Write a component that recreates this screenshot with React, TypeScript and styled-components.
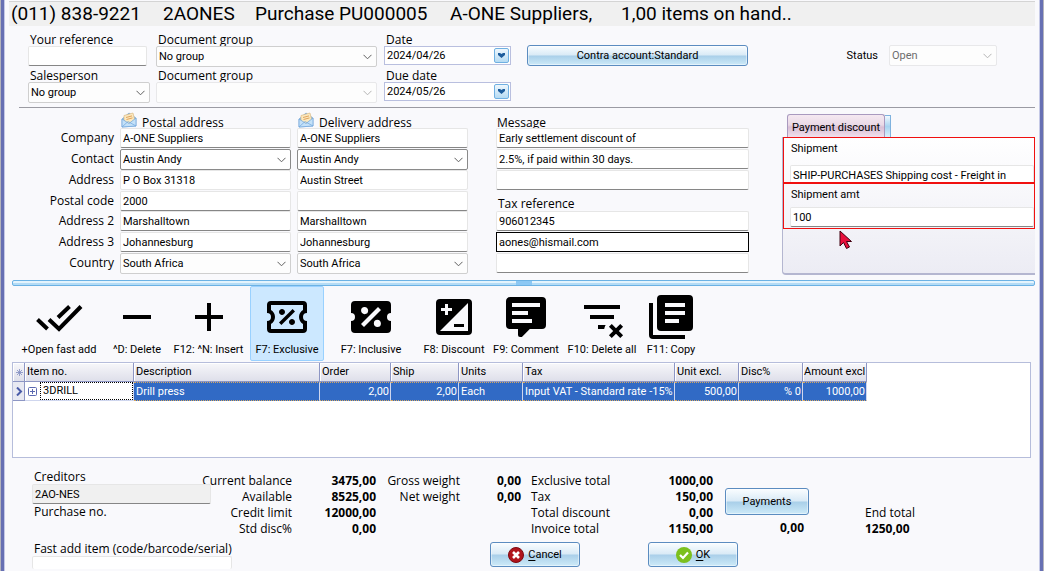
import React from "react";
import styled, { createGlobalStyle } from "styled-components";

const ui = `"Open Sans", "Noto Sans", sans-serif`;
const sans = `Roboto, "Liberation Sans", sans-serif`;

const GlobalStyle = createGlobalStyle`
  *, *::before, *::after { box-sizing: border-box; }
  body { margin: 0; background: #f9f9fc; color: #000; font: 11px/16px ${sans}; }
  input, select, button { font: inherit; color: inherit; margin: 0; }
`;

const Backdrop = styled.div`
  padding: 0 1px;
  background: #b4b4bc;
`;

const Frame = styled.div`
  display: flex;
  flex-direction: column;
  min-height: 100vh;
  overflow: hidden;
  background: #f9f9fc;
  border-left: 3px solid #6770b3;
  border-right: 3px solid #6770b3;
  box-shadow: inset 1px 0 #c5c9e6, inset -1px 0 #c5c9e6;
  padding: 1px 5px 0;
`;

const TitleBar = styled.h1`
  display: flex;
  align-items: center;
  margin: 0;
  height: 25px;
  padding-left: 2px;
  background: #f0f0f0;
  border-top: 1px solid #d4d4d4;
  font: 400 19px/24px ${sans};
  white-space: pre;
`;

const TitlePart = styled.span<{ $w?: number }>`
  width: ${(p) => (p.$w ? `${p.$w}px` : "auto")};
`;

const Label = styled.label<{ $plain?: boolean }>`
  display: block;
  font-family: ${(p) => (p.$plain ? sans : ui)};
  font-size: ${(p) => (p.$plain ? 11 : 12)}px;
  line-height: 16px;
  white-space: nowrap;
`;

const TextInput = styled.input<{ $tone?: "focus" | "grey" | "soft" }>`
  display: block;
  width: 100%;
  height: 20px;
  padding: 0 2px;
  border: 1px solid #e6e6e6;
  border-bottom-color: ${(p) => (p.$tone === "soft" ? "#e6e6e6" : "#868686")};
  border-radius: 2px;
  outline: none;
  background: ${(p) => (p.$tone === "grey" ? "#f0f0f0" : "#fff")};
  ${(p) => p.$tone === "focus" && "border-color: #000; border-radius: 0;"}
`;

const SelectBox = styled.div<{ $strong?: boolean; $off?: boolean }>`
  position: relative;
  height: 21px;
  border: 1px solid ${(p) => (p.$off ? "#e8e8ea" : p.$strong ? "#8a8a8a" : "#cfcfcf")};
  border-radius: 2px;
  background: ${(p) => (p.$strong ? "#fff" : "#fdfdfd")};
  color: ${(p) => (p.$off ? "#6d6d6d" : "#000")};
  select {
    width: 100%;
    height: 100%;
    padding: 0 18px 0 2px;
    border: 0;
    outline: none;
    background: transparent;
    appearance: none;
    opacity: 1;
  }
  svg {
    position: absolute;
    right: 4px;
    top: 7px;
    pointer-events: none;
    stroke: ${(p) => (p.$off ? "#b4b4b4" : "#606060")};
  }
`;

function Select(p: { id: string; value: string; strong?: boolean; off?: boolean; label?: string }) {
  return (
    <SelectBox $strong={p.strong} $off={p.off}>
      <select id={p.id} disabled={p.off} aria-label={p.label} defaultValue={p.value}>
        <option>{p.value}</option>
      </select>
      <svg width="9" height="6" viewBox="0 0 9 6" fill="none">
        <path d="M0.5 0.8 4.5 4.8 8.5 0.8" />
      </svg>
    </SelectBox>
  );
}

/* ---- document details ---- */

const Details = styled.section`
  display: flex;
  align-items: flex-start;
  margin-left: 10px;
  padding: 5px 0 4px 9px;
  border-bottom: 1px solid #9b9ba3;
`;

const FieldColumn = styled.div<{ $w: number; $gap: number }>`
  display: grid;
  grid-template-columns: minmax(0, 1fr);
  grid-template-rows: 15px 21px 15px 21px;
  flex: 0 0 ${(p) => p.$w}px;
  margin-right: ${(p) => p.$gap}px;
  ${Label} { padding-left: 2px; line-height: 17px; }
`;

const ShortInput = styled(TextInput)`
  width: 119px;
`;

const DateBox = styled.div`
  display: flex;
  align-items: center;
  height: 19px;
  padding-right: 1px;
  border: 1px solid #b9bfdf;
  background: #fff;
  input { flex: 1; min-width: 0; padding: 0 2px; border: 0; outline: none; background: none; }
  button {
    display: flex;
    flex: none;
    align-items: center;
    justify-content: center;
    width: 15px;
    height: 15px;
    padding: 0;
    border: 1px solid #6fb0e2;
    border-radius: 2px;
    background: linear-gradient(#eef7fd, #b5dbf3);
  }
`;

function DateField({ id, value }: { id: string; value: string }) {
  return (
    <DateBox>
      <input id={id} defaultValue={value} />
      <button aria-label="Open calendar">
        <svg width="7" height="5" viewBox="0 0 7 5">
          <path d="M0 0h2l1.500 1L5 0h2v2L3.500 5 0 2z" fill="#1c5c9c" />
        </svg>
      </button>
    </DateBox>
  );
}

const GlossButton = styled.button<{ $w: number; $h: number }>`
  display: inline-flex;
  flex: none;
  align-items: center;
  justify-content: center;
  gap: 4px;
  width: ${(p) => p.$w}px;
  height: ${(p) => p.$h}px;
  padding: 0;
  border: 1px solid #5b8cc0;
  border-radius: 3px;
  background: linear-gradient(#fafdff 0%, #d9eaf6 48%, #a9cfe9 52%, #cdeaf8 100%);
  box-shadow: inset 0 0 0 1px rgba(255, 255, 255, 0.45);
`;

const ContraSlot = styled.div`
  padding-top: 14px;
`;

const StatusField = styled.div`
  display: grid;
  grid-template-columns: auto 108px;
  align-items: center;
  gap: 11px;
  margin: 14px 38px 0 auto;
`;

/* ---- addresses ---- */

const Addresses = styled.section`
  display: flex;
  align-items: flex-start;
  padding-top: 6px;
`;

const FieldStack = styled.div<{ $w: number; $gap: number; $right?: boolean }>`
  display: grid;
  grid-template-columns: minmax(0, 1fr);
  grid-template-rows: 14px 21px 21px 21px 20px 21px 21px 21px;
  flex: 0 0 ${(p) => p.$w}px;
  margin-right: ${(p) => p.$gap}px;
  ${Label} {
    padding-left: 2px;
    line-height: ${(p) => (p.$right ? 20 : 25)}px;
    text-align: ${(p) => (p.$right ? "right" : "left")};
  }
`;

const StackHeading = styled.div`
  display: flex;
  align-items: flex-end;
  gap: 5px;
  height: 14px;
  padding-left: 1px;
  font-family: ${ui};
  font-size: 12px;
  line-height: 11px;
  white-space: nowrap;
`;

function Envelope() {
  return (
    <svg width="16" height="16" viewBox="0 0 16 16">
      <path d="M1 7 8 1l7 5v8L1 15z" fill="#8fbfe8" stroke="#6f9fd0" strokeWidth="0.6" />
      <path d="M3 3.5 12 1l2 8-6 3-5-3z" fill="#fbe9c0" stroke="#d9b177" strokeWidth="0.6" />
      <path d="M5 5.5l6-1.6M5.5 7.5l6-1.6" stroke="#e2a45c" />
      <path d="M1 7l7 4.500L15 6v8L1 15z" fill="#c4e1f8" stroke="#6fa5dc" strokeWidth="0.7" />
      <path d="M1 15l6-5.500L15 14" fill="none" stroke="#6fa5dc" strokeWidth="0.7" />
    </svg>
  );
}

const rowNames = ["Company", "Contact", "Address", "Postal code", "Address 2", "Address 3", "Country"];

function AddressStack(p: { prefix: string; title: string; rows: string[]; gap: number }) {
  return (
    <FieldStack $w={171} $gap={p.gap}>
      <StackHeading>
        <Envelope />
        {p.title}
      </StackHeading>
      {p.rows.map((v, i) =>
        i === 1 || i === 6 ? (
          <Select key={i} id={`${p.prefix}-${i}`} value={v} strong={i === 1} label={`${p.title} ${rowNames[i]}`} />
        ) : (
          <TextInput
            key={i}
            id={`${p.prefix}-${i}`}
            defaultValue={v}
            aria-label={`${p.title} ${rowNames[i]}`}
            $tone={i === 2 ? "soft" : undefined}
          />
        )
      )}
    </FieldStack>
  );
}

const DiscountPanel = styled.div`
  position: relative;
  flex: 1;
  min-width: 0;
`;

const Tabs = styled.div`
  display: flex;
  align-items: flex-end;
  height: 23px;
  padding-left: 5px;
`;

const Tab = styled.button`
  flex: none;
  height: 23px;
  width: 98px;
  padding: 3px 0 0;
  border: 1px solid #a99abf;
  border-bottom: 0;
  border-radius: 3px 3px 0 0;
  background: linear-gradient(#f5e9f1 0%, #ead9e6 45%, #d9bfd5 55%, #f0dfec 100%);
  white-space: nowrap;
`;

const TabEdge = styled.span`
  width: 6px;
  height: 22px;
  border: 1px solid #7fb2de;
  border-width: 1px 1px 0 0;
  background: linear-gradient(#f2faff, #a8d3f0 50%, #dcf0fb);
`;

const PanelBody = styled.div`
  height: 138px;
  border: solid #b4b6d0;
  border-width: 0 0 2px 1px;
  border-radius: 0 0 0 4px;
  background: linear-gradient(#fff, #ececf4);
`;

const MarkedField = styled.div<{ $label: number }>`
  height: 46px;
  padding: 3px 0 0 6px;
  border: 1px solid #f01010;
  overflow: hidden;
  ${Label} { height: ${(p) => p.$label}px; padding-left: 1px; }
`;

const Pointer = styled.svg`
  position: absolute;
  left: 57px;
  top: 116px;
`;

/* ---- splitter and toolbar ---- */

const Splitter = styled.div`
  display: flex;
  justify-content: center;
  height: 6px;
  margin: 5px 0 0 3px;
  border: 1px solid #6cb2e4;
  border-radius: 2px;
  background: linear-gradient(#e4f4fd 50%, #b4dcf6 50%);
  &::before { content: ""; width: 16px; background: #8cc8f4; }
`;

const Toolbar = styled.div`
  display: flex;
  padding-left: 2px;
`;

const Tool = styled.button<{ $w: number; $on?: boolean }>`
  display: flex;
  flex: none;
  flex-direction: column;
  align-items: center;
  width: ${(p) => p.$w}px;
  height: 75px;
  padding: 6px 0 0;
  border: 1px solid ${(p) => (p.$on ? "#99d1ff" : "transparent")};
  border-radius: 2px;
  background: ${(p) => (p.$on ? "#cce8ff" : "transparent")};
  line-height: 18px;
  white-space: nowrap;
`;

const tools: { label: string; w: number; d?: string; on?: boolean }[] = [
  { label: "+Open fast add", w: 96 },
  { label: "^D: Delete", w: 60, d: "M19 13H5v-2h14z" },
  { label: "F12: ^N: Insert", w: 83, d: "M19 13h-6v6h-2v-6H5v-2h6V5h2v6h6z" },
  {
    label: "F7: Exclusive",
    w: 74,
    on: true,
    d: "M14.8,8L16,9.2L9.2,16L8,14.8L14.8,8M4,4H20A2,2 0 0,1 22,6V10A2,2 0 0,0 20,12A2,2 0 0,0 22,14V18A2,2 0 0,1 20,20H4A2,2 0 0,1 2,18V14A2,2 0 0,0 4,12A2,2 0 0,0 2,10V6A2,2 0 0,1 4,4M4,6V8.54C5.24,9.26 6,10.57 6,12C6,13.43 5.24,14.75 4,15.46V18H20V15.46C18.76,14.74 18,13.43 18,12C18,10.57 18.76,9.25 20,8.54V6H4M9.5,8C10.33,8 11,8.67 11,9.5C11,10.33 10.33,11 9.5,11C8.67,11 8,10.33 8,9.5C8,8.67 8.67,8 9.5,8M14.5,13C15.33,13 16,13.67 16,14.5C16,15.33 15.33,16 14.5,16C13.67,16 13,15.33 13,14.5C13,13.67 13.67,13 14.5,13Z",
  },
  {
    label: "F7: Inclusive",
    w: 94,
    d: "M4,4A2,2 0 0,0 2,6V10A2,2 0 0,1 4,12A2,2 0 0,1 2,14V18A2,2 0 0,0 4,20H20A2,2 0 0,0 22,18V14A2,2 0 0,1 20,12A2,2 0 0,1 22,10V6A2,2 0 0,0 20,4H4M15.5,7L17,8.5L8.5,17L7,15.5L15.5,7M8.81,7.04C9.79,7.04 10.58,7.83 10.58,8.81A1.77,1.77 0 0,1 8.81,10.58C7.83,10.58 7.04,9.79 7.04,8.81A1.77,1.77 0 0,1 8.81,7.04M15.19,13.42C16.17,13.42 16.96,14.21 16.96,15.19A1.77,1.77 0 0,1 15.19,16.96C14.21,16.96 13.42,16.17 13.42,15.19A1.77,1.77 0 0,1 15.19,13.42Z",
  },
  {
    label: "F8: Discount",
    w: 72,
    d: "M5 3H19A2 2 0 0 1 21 5V19A2 2 0 0 1 19 21H5A2 2 0 0 1 3 19V5A2 2 0 0 1 5 3M19 5L5 19H19V5M5.5 7.5V9H7.5V11H9V9H11V7.5H9V5.5H7.5V7.5H5.5M12 15.5H17V17H12V15.5Z",
  },
  {
    label: "F9: Comment",
    w: 72,
    d: "M9,22A1,1 0 0,1 8,21V18H4A2,2 0 0,1 2,16V4C2,2.89 2.9,2 4,2H20A2,2 0 0,1 22,4V16A2,2 0 0,1 20,18H13.9L10.2,21.71C10,21.9 9.75,22 9.5,22V22H9M5,5V7H19V5H5M5,9V11H13V9H5M5,13V15H15V13H5Z",
  },
  {
    label: "F10: Delete all",
    w: 80,
    d: "M21 8H3V6H21V8M13.81 16H10V18H13.09C13.21 17.28 13.46 16.61 13.81 16M18 11H6V13H18V11M21.12 15.46L19 17.59L16.88 15.46L15.47 16.88L17.59 19L15.47 21.12L16.88 22.54L19 20.41L21.12 22.54L22.54 21.12L20.41 19L22.54 16.88L21.12 15.46Z",
  },
  {
    label: "F11: Copy",
    w: 58,
    d: "M7 1H21A2 2 0 0 1 23 3V17A2 2 0 0 1 21 19H7A2 2 0 0 1 5 17V3A2 2 0 0 1 7 1M9 5V7H19V5H9M9 9V11H19V9H9M9 13V15H16V13H9M1 5H3V21H19V23H3A2 2 0 0 1 1 21V5Z",
  },
];

/* ---- item grid ---- */

const GridBox = styled.div`
  height: 96px;
  margin: 1px 4px 0 3px;
  border: 1px solid #b6bddb;
  background: #fff;
`;

const ItemTable = styled.table`
  width: 854px;
  table-layout: fixed;
  border-collapse: separate;
  border-spacing: 0;
  th, td { height: 19px; padding: 0 1px 0 2px; white-space: nowrap; overflow: hidden; line-height: 16px; }
  th {
    border-right: 1px solid #8d96c4;
    border-bottom: 1px solid #8d96c4;
    background: linear-gradient(#f7f7fa, #dedfea);
    box-shadow: inset 1px 1px #fff;
    font-weight: 400;
    text-align: left;
  }
  th:last-child { padding: 0 0 0 1px; }
`;

const Cell = styled.td<{ $num?: boolean }>`
  border-right: 1px solid #cfd6ee;
  border-top: 1px dotted #d8a860;
  border-bottom: 1px dotted #d8a860;
  background: #316ac5;
  color: #fff;
  text-align: ${(p) => (p.$num ? "right" : "left")};
`;

const MarkCell = styled.td`
  border-right: 1px solid #8d96c4;
  border-bottom: 1px solid #8d96c4;
  background: #e8e9f2;
  svg { display: block; margin: auto; }
`;

const CodeCell = styled.td`
  border-right: 1px solid #cfd6ee;
  border-bottom: 1px solid #cfd6ee;
  && { padding: 0; }
  div { display: flex; align-items: center; gap: 3px; padding-left: 3px; }
  span { flex: 1; height: 18px; padding-left: 2px; border: 1px dotted #000; }
`;

const columns: [string, number][] = [
  ["Item no.", 109],
  ["Description", 186],
  ["Order", 71],
  ["Ship", 68],
  ["Units", 64],
  ["Tax", 152],
  ["Unit excl.", 64],
  ["Disc%", 64],
  ["Amount excl", 64],
];

/* ---- totals ---- */

const Totals = styled.section`
  display: flex;
  align-items: flex-start;
  height: 83px;
  padding-left: 23px;
  font-size: 12px;
`;

const Creditor = styled.div`
  position: relative;
  z-index: 1;
  flex: 0 0 179px;
  padding-top: 11px;
  ${Label} { padding-left: 2px; line-height: 15px; }
  input { font-size: 11px; }
`;

const Figures = styled.dl<{ $l: number; $v: number; $gap: number; $left?: boolean }>`
  display: grid;
  grid-template-columns: ${(p) => p.$l}px ${(p) => p.$v}px;
  grid-auto-rows: 16px;
  flex: none;
  margin: 15px 0 0 ${(p) => p.$gap}px;
  font-family: ${ui};
  white-space: nowrap;
  dt, dd { display: flex; margin: 0; justify-content: flex-end; }
  dt { justify-content: ${(p) => (p.$left ? "flex-start" : "flex-end")}; }
  dd { font-weight: 700; }
`;

const PaymentColumn = styled.div`
  display: flex;
  flex-direction: column;
  gap: 5px;
  margin: 30px 0 0 12px;
  font-family: ${ui};
  b { align-self: flex-end; padding-right: 5px; }
  button { font-family: ${sans}; font-size: 11px; }
`;

const EndTotal = styled.div`
  margin: 47px 0 0 56px;
  font-family: ${ui};
  b { display: block; }
`;

const Actions = styled.section`
  display: flex;
  align-items: flex-start;
  padding-left: 23px;
`;

const FastAdd = styled.div`
  flex: 0 0 200px;
  ${Label} { padding-left: 2px; line-height: 15px; }
  input { height: 13px; border-bottom: 0; }
`;

const ActionButtons = styled.div`
  display: flex;
  gap: 68px;
  margin-left: 258px;
  padding-top: 1px;
  u { text-underline-offset: 2px; }
`;

const balances = [["Current balance", "3475,00"], ["Available", "8525,00"], ["Credit limit", "12000,00"], ["Std disc%", "0,00"]];
const weights = [["Gross weight", "0,00"], ["Net weight", "0,00"]];
const totals = [["Exclusive total", "1000,00"], ["Tax", "150,00"], ["Total discount", "0,00"], ["Invoice total", "1150,00"]];

const pairs = (rows: string[][]) =>
  rows.map(([k, v]) => (
    <React.Fragment key={k}>
      <dt>{k}</dt>
      <dd>{v}</dd>
    </React.Fragment>
  ));

export default function App() {
  return (
    <Backdrop>
      <GlobalStyle />
      <Frame>
        <TitleBar>
          <TitlePart $w={152}>(011) 838-9221</TitlePart>
          <TitlePart $w={92}>2AONES</TitlePart>
          <TitlePart $w={195}>Purchase PU000005</TitlePart>
          <TitlePart $w={171}>A-ONE Suppliers,</TitlePart>
          <TitlePart>1,00 items on hand..</TitlePart>
        </TitleBar>

        <Details>
          <FieldColumn $w={122} $gap={6}>
            <Label htmlFor="ref">Your reference</Label>
            <ShortInput id="ref" />
            <Label htmlFor="sales">Salesperson</Label>
            <Select id="sales" value="No group" />
          </FieldColumn>
          <FieldColumn $w={221} $gap={7}>
            <Label htmlFor="g1">Document group</Label>
            <Select id="g1" value="No group" />
            <Label htmlFor="g2">Document group</Label>
            <Select id="g2" value="" off />
          </FieldColumn>
          <FieldColumn $w={127} $gap={16}>
            <Label htmlFor="d1">Date</Label>
            <DateField id="d1" value="2024/04/26" />
            <Label htmlFor="d2">Due date</Label>
            <DateField id="d2" value="2024/05/26" />
          </FieldColumn>
          <ContraSlot>
            <GlossButton $w={221} $h={21}>Contra account:Standard</GlossButton>
          </ContraSlot>
          <StatusField>
            <Label $plain htmlFor="status">Status</Label>
            <Select id="status" value="Open" off />
          </StatusField>
        </Details>

        <Addresses>
          <FieldStack $w={105} $gap={6} $right>
            <span />
            {rowNames.map((n, i) => (
              <Label key={n} htmlFor={`postal-${i}`}>{n}</Label>
            ))}
          </FieldStack>
          <AddressStack
            prefix="postal"
            title="Postal address"
            gap={6}
            rows={["A-ONE Suppliers", "Austin Andy", "P O Box 31318", "2000", "Marshalltown", "Johannesburg", "South Africa"]}
          />
          <AddressStack
            prefix="delivery"
            title="Delivery address"
            gap={28}
            rows={["A-ONE Suppliers", "Austin Andy", "Austin Street", "", "Marshalltown", "Johannesburg", "South Africa"]}
          />
          <FieldStack $w={253} $gap={33}>
            <StackHeading as="label" htmlFor="m1">Message</StackHeading>
            <TextInput id="m1" defaultValue="Early settlement discount of" />
            <TextInput aria-label="Message line 2" defaultValue="2.5%, if paid within 30 days." />
            <TextInput aria-label="Message line 3" />
            <Label htmlFor="tax">Tax reference</Label>
            <TextInput id="tax" defaultValue="906012345" />
            <TextInput aria-label="Email" defaultValue="aones@hismail.com" $tone="focus" />
            <TextInput aria-label="Extra reference" />
          </FieldStack>
          <DiscountPanel>
            <Tabs>
              <Tab>Payment discount</Tab>
              <TabEdge />
            </Tabs>
            <PanelBody>
              <MarkedField $label={24}>
                <Label $plain htmlFor="ship">Shipment</Label>
                <TextInput id="ship" defaultValue="SHIP-PURCHASES Shipping cost - Freight in" />
              </MarkedField>
              <MarkedField $label={20}>
                <Label $plain htmlFor="amt">Shipment amt</Label>
                <TextInput id="amt" defaultValue="100" />
              </MarkedField>
            </PanelBody>
            <Pointer width="14" height="20" viewBox="0 0 14 20">
              <path d="M1 1v15l3.500-3.500 3 6 3-1.500-3-5.500h5z" fill="#e8103c" stroke="#400010" />
            </Pointer>
          </DiscountPanel>
        </Addresses>

        <Splitter />

        <Toolbar>
          {tools.map((t) => (
            <Tool key={t.label} $w={t.w} $on={t.on}>
              {t.d ? (
                <svg width="48" height="48" viewBox="0 0 24 24">
                  <path d={t.d} fillRule="evenodd" />
                </svg>
              ) : (
                <svg width="48" height="48" viewBox="0 0 48 48" fill="none" stroke="#000" strokeWidth="4">
                  <path d="M2.500 26.500 12.500 36M14 26.500 24 36 46 13.500M23 24.500 34.500 13.500" />
                </svg>
              )}
              {t.label}
            </Tool>
          ))}
        </Toolbar>

        <GridBox>
          <ItemTable>
            <colgroup>
              <col width={12} />
              {columns.map(([n, w]) => <col key={n} width={w} />)}
            </colgroup>
            <thead>
              <tr>
                <MarkCell as="th" aria-label="Row marker">
                  <svg width="7" height="7" viewBox="0 0 7 7" stroke="#7f8cc0">
                    <path d="M3.500 0v7M0 3.500h7M1 1l5 5M6 1 1 6" strokeWidth="0.8" />
                  </svg>
                </MarkCell>
                {columns.map(([n]) => <th key={n}>{n}</th>)}
              </tr>
            </thead>
            <tbody>
              <tr>
                <MarkCell>
                  <svg width="7" height="9" viewBox="0 0 7 9" fill="none" stroke="#4a5ba8" strokeWidth="2">
                    <path d="M1 0.500 5 4.500 1 8.500" />
                  </svg>
                </MarkCell>
                <CodeCell>
                  <div>
                    <svg width="9" height="9" viewBox="0 0 9 9" fill="#fff" stroke="#5a68b0">
                      <rect x="0.500" y="0.500" width="8" height="8" rx="1" />
                      <path d="M2 4.500h5M4.500 2v5" />
                    </svg>
                    <span>3DRILL</span>
                  </div>
                </CodeCell>
                <Cell>Drill press</Cell>
                <Cell $num>2,00</Cell>
                <Cell $num>2,00</Cell>
                <Cell>Each</Cell>
                <Cell>Input VAT - Standard rate -15%</Cell>
                <Cell $num>500,00</Cell>
                <Cell $num>% 0</Cell>
                <Cell $num>1000,00</Cell>
              </tr>
            </tbody>
          </ItemTable>
        </GridBox>

        <Totals>
          <Creditor>
            <Label htmlFor="cred">Creditors</Label>
            <TextInput id="cred" defaultValue="2AO-NES" $tone="grey" />
            <Label as="div">Purchase no.</Label>
          </Creditor>
          <Figures $l={81} $v={84} $gap={0}>{pairs(balances)}</Figures>
          <Figures $l={84} $v={61} $gap={0}>{pairs(weights)}</Figures>
          <Figures $l={100} $v={82} $gap={10} $left>{pairs(totals)}</Figures>
          <PaymentColumn>
            <GlossButton $w={84} $h={27}>Payments</GlossButton>
            <b>0,00</b>
          </PaymentColumn>
          <EndTotal>
            End total
            <b>1250,00</b>
          </EndTotal>
        </Totals>

        <Actions>
          <FastAdd>
            <Label htmlFor="fast">Fast add item (code/barcode/serial)</Label>
            <TextInput id="fast" />
          </FastAdd>
          <ActionButtons>
            <GlossButton $w={90} $h={25}>
              <svg width="16" height="16" viewBox="0 0 16 16">
                <circle cx="8" cy="8" r="7.500" fill="#b0141c" stroke="#7c0c12" />
                <path d="M5 5l6 6M11 5l-6 6" stroke="#fff" strokeWidth="2.600" />
              </svg>
              <span><u>C</u>ancel</span>
            </GlossButton>
            <GlossButton $w={90} $h={25}>
              <svg width="16" height="16" viewBox="0 0 16 16">
                <circle cx="8" cy="8" r="8" fill="#7cc01e" />
                <path d="M4 8l3 3 5-5.500" fill="none" stroke="#fff" strokeWidth="2.200" />
              </svg>
              <span><u>O</u>K</span>
            </GlossButton>
          </ActionButtons>
        </Actions>
      </Frame>
    </Backdrop>
  );
}
